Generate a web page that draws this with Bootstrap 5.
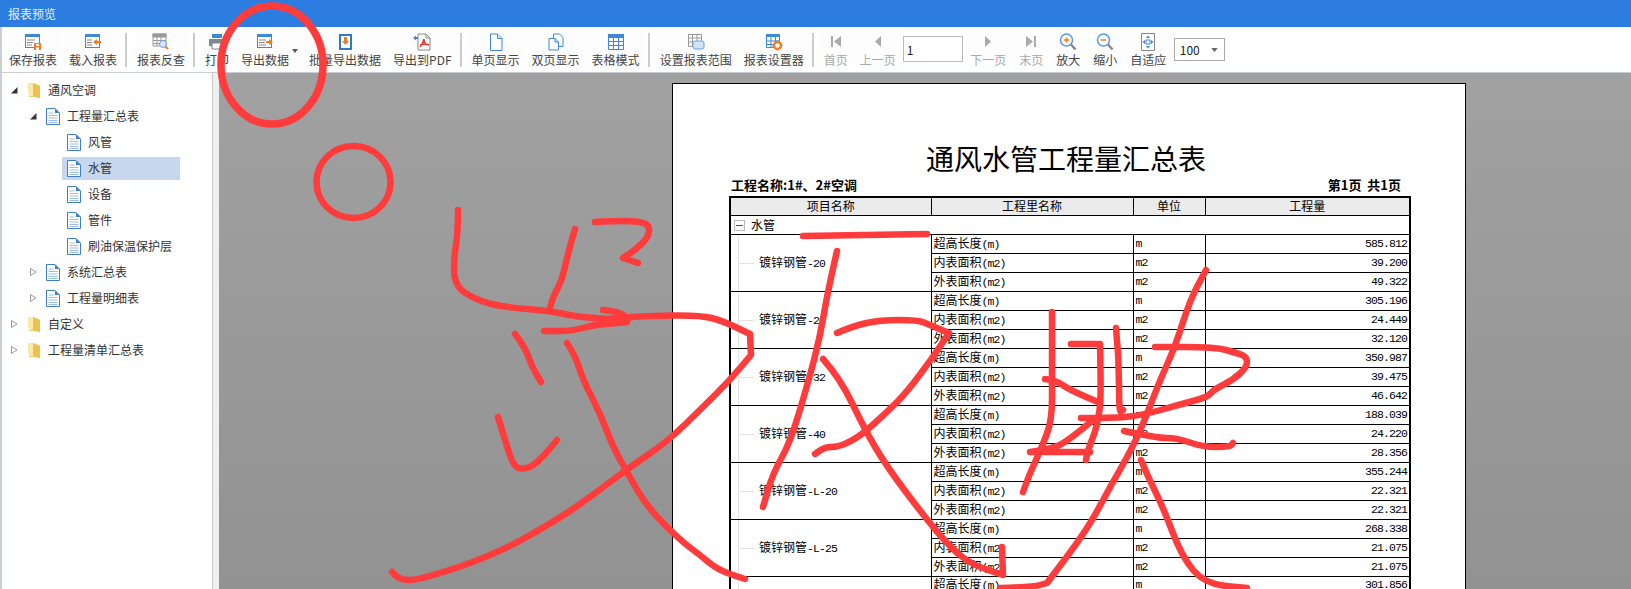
<!DOCTYPE html>
<html lang="zh-CN">
<head>
  <meta charset="UTF-8">
  <title>报表预览</title>
  <link href="https://cdn.jsdelivr.net/npm/bootstrap@5.3.2/dist/css/bootstrap.min.css" rel="stylesheet">
  <style>
    body { font-family: "Noto Sans CJK SC", "Liberation Sans", sans-serif; font-size: 12px; color: #333; background: #c8ced6; }
    .app-title { height: 27px; line-height: 27px; padding-left: 8px; background: #2d7de0; color: #e3edf9; }
    .app-tools { height: 45px; margin-left: 2px; padding: 2px 0 2px 2px; gap: 2px; background: #fff; }
    .tool-btn { height: 41px; padding: 4px 5px 0; background: #fdfdfd; border-radius: 3px; color: #444; white-space: nowrap; text-align: center; }
    .tool-btn svg { display: block; width: 18px; height: 18px; margin: 0 auto 1px; }
    .tool-btn span { display: block; line-height: 15px; }
    .tool-btn.is-off { color: #aaa; }
    .tool-tail { padding: 4px 5.5px 0; }
    .tool-drop { padding-right: 13px; }
    .tool-drop::after { content: ""; position: absolute; top: 20px; right: 4px; border: 3.5px solid transparent; border-top: 4px solid #555; border-bottom: 0; }
    .tool-sep { width: 2px; height: 34px; align-self: center; margin: 0 3px 0 1px; background: #ccc; }
    .page-input { width: 60px; height: 26px; margin: 7px 0 0 0; padding: 0 3px; border: 1px solid #bbb; border-radius: 0; font-size: 12px; color: #222; }
    .zoom-select { width: 51px; height: 23px; margin: 9px 0 0 0; padding: 0 0 0 5px; border: 1px solid #aaa; border-radius: 0; font-size: 12px; color: #222; background-size: 7px 4px; background-position: right 6px center; background-image: url("data:image/svg+xml,%3csvg xmlns='http://www.w3.org/2000/svg' viewBox='0 0 8 5'%3e%3cpath fill='%23666' d='M0 0h8L4 5z'/%3e%3c/svg%3e"); }
    .app-main { min-height: 0; margin-top: 1px; padding-left: 2px; }
    .tree-panel { width: 211px; padding-top: 4px; background: #fff; border-right: 1px solid #c9c9c9; }
    .tree-strip { width: 6px; background: #efefef; }
    .tree-row { height: 26px; color: #333; }
    .tree-row svg { flex: none; }
    .tree-arrow { width: 8px; height: 8px; margin-right: 9px; }
    .tree-lv0 { padding-left: 8px; }
    .tree-lv1 { padding-left: 27px; }
    .tree-lv2 { padding-left: 60px; }
    .tree-ico { width: 14px; height: 17px; margin-right: 7px; }
    .tree-label { height: 23px; width: 118px; padding-left: 5px; }
    .tree-label.is-on { background: #c7d7ee; }
    .report-view { background: linear-gradient(#a1a1a1, #929292); padding: 10px 0 0 453px; overflow: hidden; }
    .report-sheet { width: 794px; min-height: 700px; padding: 56px 56px 0; background: #fff; border: 1px solid #000; color: #000; }
    .report-title { height: 37px; line-height: 37px; margin: 0; padding-right: 6px; font-size: 28px; font-weight: 400; text-align: center; }
    .report-meta { height: 19px; line-height: 16px; padding: 0 8px 0 2px; font-size: 13px; font-weight: 700; }
    .report-table { width: 680px; table-layout: fixed; border-collapse: collapse; border: 2px solid #000; }
    .report-table th, .report-table td { height: 19px; padding: 0 2px; line-height: 14px; border: 1px solid #000; font-weight: 400; font-size: 12px; white-space: nowrap; overflow: hidden; }
    .report-table th { height: 18px; background: #ebebeb; text-align: center; }
    .report-table .group-cell { padding-left: 8px; background: linear-gradient(#e3e3e3, #e3e3e3) no-repeat 7px 0 / 1px 100%; }
    .group-dash { display: inline-block; width: 15px; height: 1px; margin-right: 5px; vertical-align: middle; background: #e3e3e3; }
    .report-table .mono-txt { font-family: "Liberation Mono", "DejaVu Sans Mono", monospace; font-size: 11.5px; letter-spacing: -.9px; line-height: 14px; }
    .minus-box { display: inline-block; width: 11px; height: 11px; margin: 0 6px 0 1px; vertical-align: -1px; border: 1px solid #bbb; background: linear-gradient(#555, #555) no-repeat center / 7px 1px; }
    .ink-layer { position: absolute; top: 0; left: 0; pointer-events: none; }
    .ink-layer path, .ink-layer ellipse { fill: none; stroke: #ff3b3b; stroke-width: 6.5; stroke-linecap: round; stroke-linejoin: round; }
    .ink-layer .ink-fat { stroke-width: 7.5; }
  </style>
</head>
<body class="vh-100 overflow-hidden d-flex flex-column position-relative">

  <!-- icon set -->
  <svg class="d-none" xmlns="http://www.w3.org/2000/svg">
    <symbol id="i-save" viewBox="0 0 18 18"><rect x="1.5" y="1.5" width="14" height="13" fill="#fff" stroke="#3f88d8"/><rect x="1" y="1" width="15" height="3" fill="#3f88d8"/><path d="M3 7h8M3 9.5h6M3 12h5" stroke="#888"/><path d="M10 10h7v7h-7z" fill="#f47b20"/><path d="M12 11h3v2h-3zM12 14.5h3V17h-3z" fill="#fff"/></symbol>
    <symbol id="i-load" viewBox="0 0 18 18"><rect x="1.5" y="1.5" width="14" height="13" fill="#fff" stroke="#3f88d8"/><rect x="1" y="1" width="15" height="3" fill="#3f88d8"/><path d="M3 7h5M3 9.5h5M3 12h5" stroke="#888"/><path d="M9 9l4-3v2h4v2h-4v2z" fill="#f47b20"/></symbol>
    <symbol id="i-find" viewBox="0 0 18 18"><path d="M1 1h13v12H1z" fill="#fff" stroke="#999"/><path d="M1 1h13v3H1zM5 4v9M9 4v9M1 7.5h13M1 10.500h13" fill="#999" stroke="#999"/><circle cx="11" cy="11" r="3.500" fill="#d4e6f8" stroke="#6ba3dc"/><path d="M13.500 13.500l2.500 2.500" stroke="#f47b20" stroke-width="2"/></symbol>
    <symbol id="i-print" viewBox="0 0 18 18"><path d="M4 1h10v4H4z" fill="#3f88d8"/><path d="M1 6h16v7H1z" fill="#7d8a96"/><path d="M4 10h10v6H4z" fill="#fff" stroke="#7d8a96"/></symbol>
    <symbol id="i-export" viewBox="0 0 18 18"><rect x="1.5" y="1.500" width="14" height="13" fill="#fff" stroke="#3f88d8"/><rect x="1" y="1" width="15" height="3" fill="#3f88d8"/><path d="M3 7h7M3 9.500h6M3 12h7" stroke="#888"/><path d="M17 9l-4-3v2h-3v2h3v2z" fill="#f47b20"/></symbol>
    <symbol id="i-batch" viewBox="0 0 18 18"><path d="M3 1h13v16H3z" fill="#2f78c4"/><path d="M5 3h9v12H5z" fill="#fff"/><path d="M8 4h3v4h2l-3.500 4L6 8h2z" fill="#f47b20"/></symbol>
    <symbol id="i-pdf" viewBox="0 0 18 18"><path d="M5 1h8l4 4v12H5z" fill="#fff" stroke="#888"/><path d="M13 1v4h4" fill="none" stroke="#888"/><path d="M11 6c-1 4-2 6-4 8M11 6c0 4 2 6 5 6M7 12c3-1 6-1 9-.5" fill="none" stroke="#e0392b" stroke-width="1.500"/><path d="M0 5l3-2.500V4h2v2H3v1.500z" fill="#3f88d8"/></symbol>
    <symbol id="i-page" viewBox="0 0 18 18"><path d="M3.500 1h7l4.500 4.500v12h-11.500z" fill="#fff" stroke="#3f88d8"/><path d="M10.500 1v4.500h4.500" fill="#d6e6f7" stroke="#3f88d8"/></symbol>
    <symbol id="i-pages" viewBox="0 0 18 18"><path d="M6.500 1h6l3.500 3.500v9h-9.500z" fill="#fff" stroke="#3f88d8"/><path d="M2 5.500h6l3.500 3.500v8H2z" fill="#fff" stroke="#3f88d8"/><path d="M8 5.500V9h3.500" fill="none" stroke="#3f88d8"/></symbol>
    <symbol id="i-grid" viewBox="0 0 18 18"><path d="M1.500 1.500h15v15h-15z" fill="#fff" stroke="#3f88d8"/><path d="M1 1h16v4H1z" fill="#3f88d8"/><path d="M6.500 5v11M11.500 5v11M1.500 8.500h15M1.500 12.500h15" stroke="#3f88d8"/></symbol>
    <symbol id="i-range" viewBox="0 0 18 18"><path d="M1.500 1.500h13v12h-13z" fill="#fff" stroke="#999"/><path d="M5.500 1.500v12M10 1.500v12M1.500 5h13M1.500 9h13" stroke="#999"/><rect x="6" y="8" width="11" height="8" rx="2" fill="#cfe2f6" stroke="#6ba3dc"/></symbol>
    <symbol id="i-setup" viewBox="0 0 18 18"><path d="M1.500 1.500h13v13h-13z" fill="#fff" stroke="#3f88d8"/><path d="M1 1h14v3H1z" fill="#3f88d8"/><path d="M6 4v10M10.500 4v10M1.500 8h13M1.500 11.500h13" stroke="#3f88d8"/><circle cx="12.500" cy="12.500" r="3.500" fill="#fff" stroke="#f47b20" stroke-width="2.500"/><path d="M12.500 7.500v10M7.500 12.500h10" stroke="#f47b20" stroke-width="1.500" stroke-dasharray="2 6"/></symbol>
    <symbol id="i-first" viewBox="0 0 18 18"><path d="M4 3h2v11H4zM14 3v11L7 8.500z" fill="#aaa"/></symbol>
    <symbol id="i-prev" viewBox="0 0 18 18"><path d="M12 3v11L6 8.500z" fill="#aaa"/></symbol>
    <symbol id="i-next" viewBox="0 0 18 18"><path d="M6 3v11l6-5.500z" fill="#aaa"/></symbol>
    <symbol id="i-last" viewBox="0 0 18 18"><path d="M12 3h2v11h-2zM4 3v11l7-5.500z" fill="#aaa"/></symbol>
    <symbol id="i-plus" viewBox="0 0 18 18"><circle cx="7.500" cy="7" r="6" fill="#fff" stroke="#5a9be0" stroke-width="1.500"/><path d="M5 7h5M7.500 4.500v5" stroke="#f47b20" stroke-width="1.500"/><path d="M12 11.500l4.500 5" stroke="#888" stroke-width="2.500"/></symbol>
    <symbol id="i-minus" viewBox="0 0 18 18"><circle cx="7.500" cy="7" r="6" fill="#fff" stroke="#5a9be0" stroke-width="1.500"/><path d="M5 7h5" stroke="#f47b20" stroke-width="1.500"/><path d="M12 11.500l4.500 5" stroke="#888" stroke-width="2.500"/></symbol>
    <symbol id="i-fit" viewBox="0 0 18 18"><path d="M2.500 .5h13v17h-13z" fill="#fff" stroke="#888"/><rect x="7" y="7" width="4" height="4" fill="none" stroke="#3f88d8"/><path d="M9 2.500l2 2.500H7zM9 15.500L7 13h4zM3.500 9L6 7v4zM14.500 9L12 11V7z" fill="#3f88d8"/></symbol>
    <symbol id="i-folder" viewBox="0 0 14 17"><path d="M1 1h5l7 3v12l-6-1H2z" fill="#f3cf6d"/><path d="M1 1h5v13H2z" fill="#fbe9a8"/><path d="M6 1l7 3v12l-7-2z" fill="#eec054"/></symbol>
    <symbol id="i-doc" viewBox="0 0 14 17"><path d="M.5.500h8.500l4.500 4.500v11.500H.5z" fill="#fff" stroke="#3f7fc9"/><path d="M9 .5V5h4.500z" fill="#3f7fc9"/><path d="M2.500 5h5M2.500 7.500h9M2.500 10h9M2.500 12.500h9M2.500 14.500h9" stroke="#9dbde4"/></symbol>
    <symbol id="i-open" viewBox="0 0 8 8"><path d="M7.500 1v6.500H1z" fill="#333"/></symbol>
    <symbol id="i-shut" viewBox="0 0 8 8"><path d="M1.500 .5v7l5.500-3.500z" fill="#fff" stroke="#999"/></symbol>
  </svg>

  <div class="app-title flex-shrink-0">报表预览</div>

  <!-- toolbar -->
  <div class="app-tools d-flex flex-shrink-0">
    <div class="tool-btn"><svg><use href="#i-save"/></svg><span>保存报表</span></div>
    <div class="tool-btn"><svg><use href="#i-load"/></svg><span>载入报表</span></div>
    <div class="tool-sep"></div>
    <div class="tool-btn"><svg><use href="#i-find"/></svg><span>报表反查</span></div>
    <div class="tool-sep"></div>
    <div class="tool-btn"><svg><use href="#i-print"/></svg><span>打印</span></div>
    <div class="tool-btn tool-drop position-relative"><svg><use href="#i-export"/></svg><span>导出数据</span></div>
    <div class="tool-btn"><svg><use href="#i-batch"/></svg><span>批量导出数据</span></div>
    <div class="tool-btn"><svg><use href="#i-pdf"/></svg><span>导出到PDF</span></div>
    <div class="tool-sep"></div>
    <div class="tool-btn"><svg><use href="#i-page"/></svg><span>单页显示</span></div>
    <div class="tool-btn"><svg><use href="#i-pages"/></svg><span>双页显示</span></div>
    <div class="tool-btn"><svg><use href="#i-grid"/></svg><span>表格模式</span></div>
    <div class="tool-sep"></div>
    <div class="tool-btn"><svg><use href="#i-range"/></svg><span>设置报表范围</span></div>
    <div class="tool-btn"><svg><use href="#i-setup"/></svg><span>报表设置器</span></div>
    <div class="tool-sep"></div>
    <div class="tool-btn is-off"><svg><use href="#i-first"/></svg><span>首页</span></div>
    <div class="tool-btn is-off"><svg><use href="#i-prev"/></svg><span>上一页</span></div>
    <input type="text" class="form-control page-input" value="1">
    <div class="tool-btn tool-tail is-off"><svg><use href="#i-next"/></svg><span>下一页</span></div>
    <div class="tool-btn tool-tail is-off"><svg><use href="#i-last"/></svg><span>末页</span></div>
    <div class="tool-btn tool-tail"><svg><use href="#i-plus"/></svg><span>放大</span></div>
    <div class="tool-btn tool-tail"><svg><use href="#i-minus"/></svg><span>缩小</span></div>
    <div class="tool-btn tool-tail"><svg><use href="#i-fit"/></svg><span>自适应</span></div>
    <select class="form-select zoom-select"><option>100</option></select>
  </div>

  <div class="app-main d-flex flex-grow-1">
    <!-- tree -->
    <ul class="tree-panel list-unstyled m-0 flex-shrink-0">
      <li class="tree-row tree-lv0 d-flex align-items-center"><svg class="tree-arrow"><use href="#i-open"/></svg><svg class="tree-ico"><use href="#i-folder"/></svg>通风空调</li>
      <li class="tree-row tree-lv1 d-flex align-items-center"><svg class="tree-arrow"><use href="#i-open"/></svg><svg class="tree-ico"><use href="#i-doc"/></svg>工程量汇总表</li>
      <li class="tree-row tree-lv2 d-flex align-items-center"><div class="tree-label d-flex align-items-center"><svg class="tree-ico"><use href="#i-doc"/></svg>风管</div></li>
      <li class="tree-row tree-lv2 d-flex align-items-center"><div class="tree-label is-on d-flex align-items-center"><svg class="tree-ico"><use href="#i-doc"/></svg>水管</div></li>
      <li class="tree-row tree-lv2 d-flex align-items-center"><div class="tree-label d-flex align-items-center"><svg class="tree-ico"><use href="#i-doc"/></svg>设备</div></li>
      <li class="tree-row tree-lv2 d-flex align-items-center"><div class="tree-label d-flex align-items-center"><svg class="tree-ico"><use href="#i-doc"/></svg>管件</div></li>
      <li class="tree-row tree-lv2 d-flex align-items-center"><div class="tree-label d-flex align-items-center"><svg class="tree-ico"><use href="#i-doc"/></svg>刷油保温保护层</div></li>
      <li class="tree-row tree-lv1 d-flex align-items-center"><svg class="tree-arrow"><use href="#i-shut"/></svg><svg class="tree-ico"><use href="#i-doc"/></svg>系统汇总表</li>
      <li class="tree-row tree-lv1 d-flex align-items-center"><svg class="tree-arrow"><use href="#i-shut"/></svg><svg class="tree-ico"><use href="#i-doc"/></svg>工程量明细表</li>
      <li class="tree-row tree-lv0 d-flex align-items-center"><svg class="tree-arrow"><use href="#i-shut"/></svg><svg class="tree-ico"><use href="#i-folder"/></svg>自定义</li>
      <li class="tree-row tree-lv0 d-flex align-items-center"><svg class="tree-arrow"><use href="#i-shut"/></svg><svg class="tree-ico"><use href="#i-folder"/></svg>工程量清单汇总表</li>
    </ul>
    <div class="tree-strip flex-shrink-0"></div>

    <!-- report page -->
    <div class="report-view flex-grow-1">
      <div class="report-sheet">
        <h1 class="report-title">通风水管工程量汇总表</h1>
        <div class="report-meta d-flex justify-content-between">
          <span>工程名称:1#、2#空调</span>
          <span>第1页&nbsp;&nbsp;共1页</span>
        </div>
        <table class="report-table">
          <colgroup><col style="width:201px"><col style="width:202px"><col style="width:72px"><col style="width:205px"></colgroup>
          <thead>
            <tr><th>项目名称</th><th>工程里名称</th><th>单位</th><th>工程量</th></tr>
          </thead>
          <tbody id="reportRows">
            <tr><td colspan="4"><span class="minus-box"></span>水管</td></tr>
          </tbody>
        </table>
      </div>
    </div>
  </div>

  <!-- red pen marks drawn over the window -->
  <svg class="ink-layer" id="inkLayer" width="1631" height="589">
    <ellipse class="ink-fat" cx="272" cy="65" rx="51" ry="59"/>
    <ellipse cx="353.500" cy="182" rx="37" ry="36"/>
  </svg>

  <script src="https://cdn.jsdelivr.net/npm/bootstrap@5.3.2/dist/js/bootstrap.bundle.min.js"></script>
  <script>
const groups = [
  ['-20', '585.812', '39.200', '49.322'],
  ['-25', '305.196', '24.449', '32.120'],
  ['-32', '350.987', '39.475', '46.642'],
  ['-40', '188.039', '24.220', '28.356'],
  ['-L-20', '355.244', '22.321', '22.321'],
  ['-L-25', '268.338', '21.075', '21.075'],
];
const num = v => `<td class="mono-txt text-end">${v}</td>`;
const rows = groups.map(g => `
  <tr><td rowspan="3" class="group-cell"><span class="group-dash"></span>镀锌钢管<span class="mono-txt">${g[0]}</span></td>
    <td>超高长度<span class="mono-txt">(m)</span></td><td class="mono-txt">m</td>${num(g[1])}</tr>
  <tr><td>内表面积<span class="mono-txt">(m2)</span></td><td class="mono-txt">m2</td>${num(g[2])}</tr>
  <tr><td>外表面积<span class="mono-txt">(m2)</span></td><td class="mono-txt">m2</td>${num(g[3])}</tr>`).join('');
const tail = `<tr><td class="group-cell"></td><td>超高长度<span class="mono-txt">(m)</span></td><td class="mono-txt">m</td>${num('301.856')}</tr>`;
document.getElementById('reportRows').insertAdjacentHTML('beforeend', rows + tail);

// pen strokes, x,y pairs; a repeated point keeps a sharp corner
const strokes = [
  [458,210,458,232,454,257,454,280,463,293,488,304,515,308,550,311,573,316,603,319,623,318,643,316,700,315,723,321,750,334,750,334,751,355,751,355,730,380,703,407,667,442,627,469,593,495,560,518,497,554,420,580,400,580,392,572],
  [603,310,623,312,627,322,627,322,617,323,593,325,573,331,544,331],
  [575,229,568,253,562,280,553,297,550,308],
  [595,222,613,221,637,221,650,225,648,238,635,250,623,258,623,258,638,263],
  [515,334,525,347,532,367,541,382],
  [498,417,505,440,512,462,518,469,530,468,543,457,557,440],
  [567,343,575,355,583,380,600,413,613,447,627,472,647,507,680,540,700,555,718,570,745,579],
  [803,236,927,234],
  [837,251,828,290,820,337,808,383,790,443,773,473,763,507],
  [837,333,853,326,880,320,918,320,930,325,949,333,949,333,933,357,907,392,887,412,865,432,850,442,837,447,825,447,815,454],
  [823,359,840,378,865,430,887,467,927,520,953,550,973,565,1003,575,1003,575,1002,547],
  [1000,588,1033,587,1047,583,1047,583,1087,530,1110,487,1137,440,1160,380,1175,347,1190,300,1206,270],
  [1052,312,1052,378,1052,420,1042,447,1030,473,1023,492],
  [1045,379,1055,380,1070,390,1098,402],
  [1071,344,1100,344,1100,344,1101,400,1098,420,1095,432,1088,450,1086,460],
  [1116,328,1119,357,1119,413,1123,410],
  [1081,418,1117,418,1143,415,1178,405,1208,397,1213,390,1233,380,1247,367,1247,357,1237,353,1215,347,1155,347],
  [1093,420,1067,442,1050,449,1030,452,1030,452,1090,452],
  [1124,431,1157,438,1177,438,1203,447,1230,447,1233,443],
  [1141,460,1148,477,1163,507,1182,557,1205,584,1247,588],
];
const ink = document.getElementById('inkLayer');
strokes.forEach(s => {
  let d = `M${s[0]} ${s[1]}`;
  for (let i = 2; i < s.length - 2; i += 2) {
    d += `Q${s[i]} ${s[i + 1]} ${(s[i] + s[i + 2]) / 2} ${(s[i + 1] + s[i + 3]) / 2}`;
  }
  d += `L${s[s.length - 2]} ${s[s.length - 1]}`;
  const p = document.createElementNS('http://www.w3.org/2000/svg', 'path');
  p.setAttribute('d', d);
  ink.appendChild(p);
});
  </script>
</body>
</html>
